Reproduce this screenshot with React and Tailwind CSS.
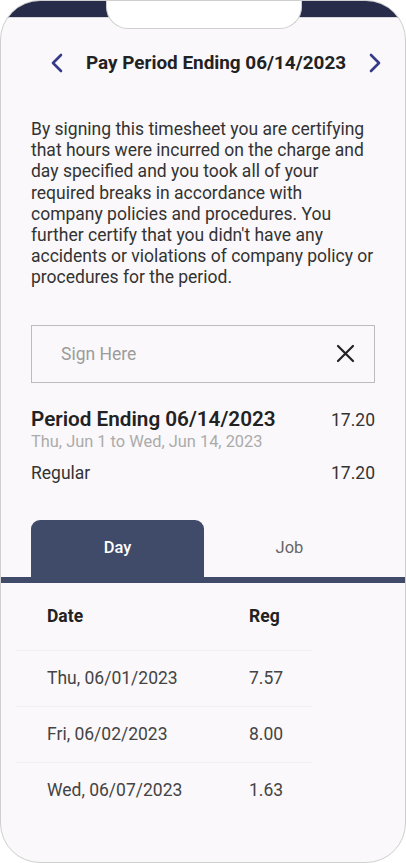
import React from "react";

const rows = [
  { date: "Thu, 06/01/2023", reg: "7.57" },
  { date: "Fri, 06/02/2023", reg: "8.00" },
  { date: "Wed, 06/07/2023", reg: "1.63" },
];

const Chevron = ({ dir }) => (
  <svg width="14" height="20" viewBox="0 0 14 20" fill="none">
    <path
      d={dir === "left" ? "M11 2 L3 10 L11 18" : "M3 2 L11 10 L3 18"}
      stroke="#37398a"
      strokeWidth="2.6"
      strokeLinecap="round"
      strokeLinejoin="round"
    />
  </svg>
);

const App = () => {
  return (
    <div
      className="w-[406px] h-[863px] bg-white"
      style={{ fontFamily: "Roboto, 'Liberation Sans', sans-serif" }}
    >
      <div className="relative w-full h-full rounded-[40px] border border-[#cfcfcf] overflow-hidden bg-[#faf8fa] flex flex-col">
        {/* top band + notch */}
        <div className="h-[17px] bg-[#262c4a] border-b border-[#d8d8dc] shrink-0"></div>
        <div className="absolute left-[105px] top-[-1px] w-[196px] h-[29px] bg-white rounded-b-[22px] border border-t-0 border-[#cfcfcf]"></div>

        {/* header */}
        <div className="mt-[33px] h-6 flex items-center pl-[49px] gap-[22px]">
          <Chevron dir="left" />
          <h1 className="text-[18.9px] font-bold text-[#222] whitespace-nowrap">
            Pay Period Ending 06/14/2023
          </h1>
          <Chevron dir="right" />
        </div>

        {/* certification text */}
        <p className="mt-[44px] px-[30px] text-[17.5px] leading-[21.2px] text-[#333]">
          By signing this timesheet you are certifying that hours were incurred
          on the charge and day specified and you took all of your required
          breaks in accordance with company policies and procedures. You further
          certify that you didn't have any accidents or violations of company
          policy or procedures for the period.
        </p>

        {/* signature box */}
        <div className="mt-[36px] mx-[30px] h-[58px] border-[1.5px] border-[#bcbcbc] flex items-center justify-between pl-[29px] pr-[19px]">
          <span className="text-[17.5px] text-[#9c9c9c]">Sign Here</span>
          <svg width="19" height="19" viewBox="0 0 19 19" fill="none">
            <path
              d="M2 2 L17 17 M17 2 L2 17"
              stroke="#222"
              strokeWidth="2.2"
              strokeLinecap="round"
            />
          </svg>
        </div>

        {/* period summary */}
        <div className="mt-[25px] px-[30px]">
          <div className="flex items-center justify-between h-6">
            <span className="text-[20.7px] font-semibold text-[#222] whitespace-nowrap">
              Period Ending 06/14/2023
            </span>
            <span className="text-[17.5px] text-[#333]">17.20</span>
          </div>
          <div className="text-[16.4px] leading-[19px] text-[#ababab]">
            Thu, Jun 1 to Wed, Jun 14, 2023
          </div>
          <div className="mt-[12px] flex items-center justify-between h-5 text-[17.5px] text-[#333]">
            <span>Regular</span>
            <span>17.20</span>
          </div>
        </div>

        {/* tabs */}
        <div className="mt-[37px] flex px-[30px]">
          <div className="w-[173px] h-[57px] bg-[#404b69] rounded-t-[9px] flex items-center justify-center text-[16.5px] font-medium text-white">
            Day
          </div>
          <div className="flex-1 h-[57px] flex items-center justify-center text-[16.5px] text-[#666]">
            Job
          </div>
        </div>
        <div className="h-[6px] bg-[#404b69] shrink-0"></div>

        {/* table */}
        <div className="ml-[15px] w-[297px]">
          <div className="h-[67px] flex items-center text-[17.5px] font-bold text-[#222]">
            <div className="w-[233px] pl-[31px]">Date</div>
            <div>Reg</div>
          </div>
          {rows.map((r) => (
            <div
              key={r.date}
              className="h-[56px] flex items-center border-t border-[#f3f0f3] text-[17.5px] text-[#444]"
            >
              <div className="w-[233px] pl-[31px]">{r.date}</div>
              <div>{r.reg}</div>
            </div>
          ))}
        </div>
      </div>
    </div>
  );
};

export default App;
